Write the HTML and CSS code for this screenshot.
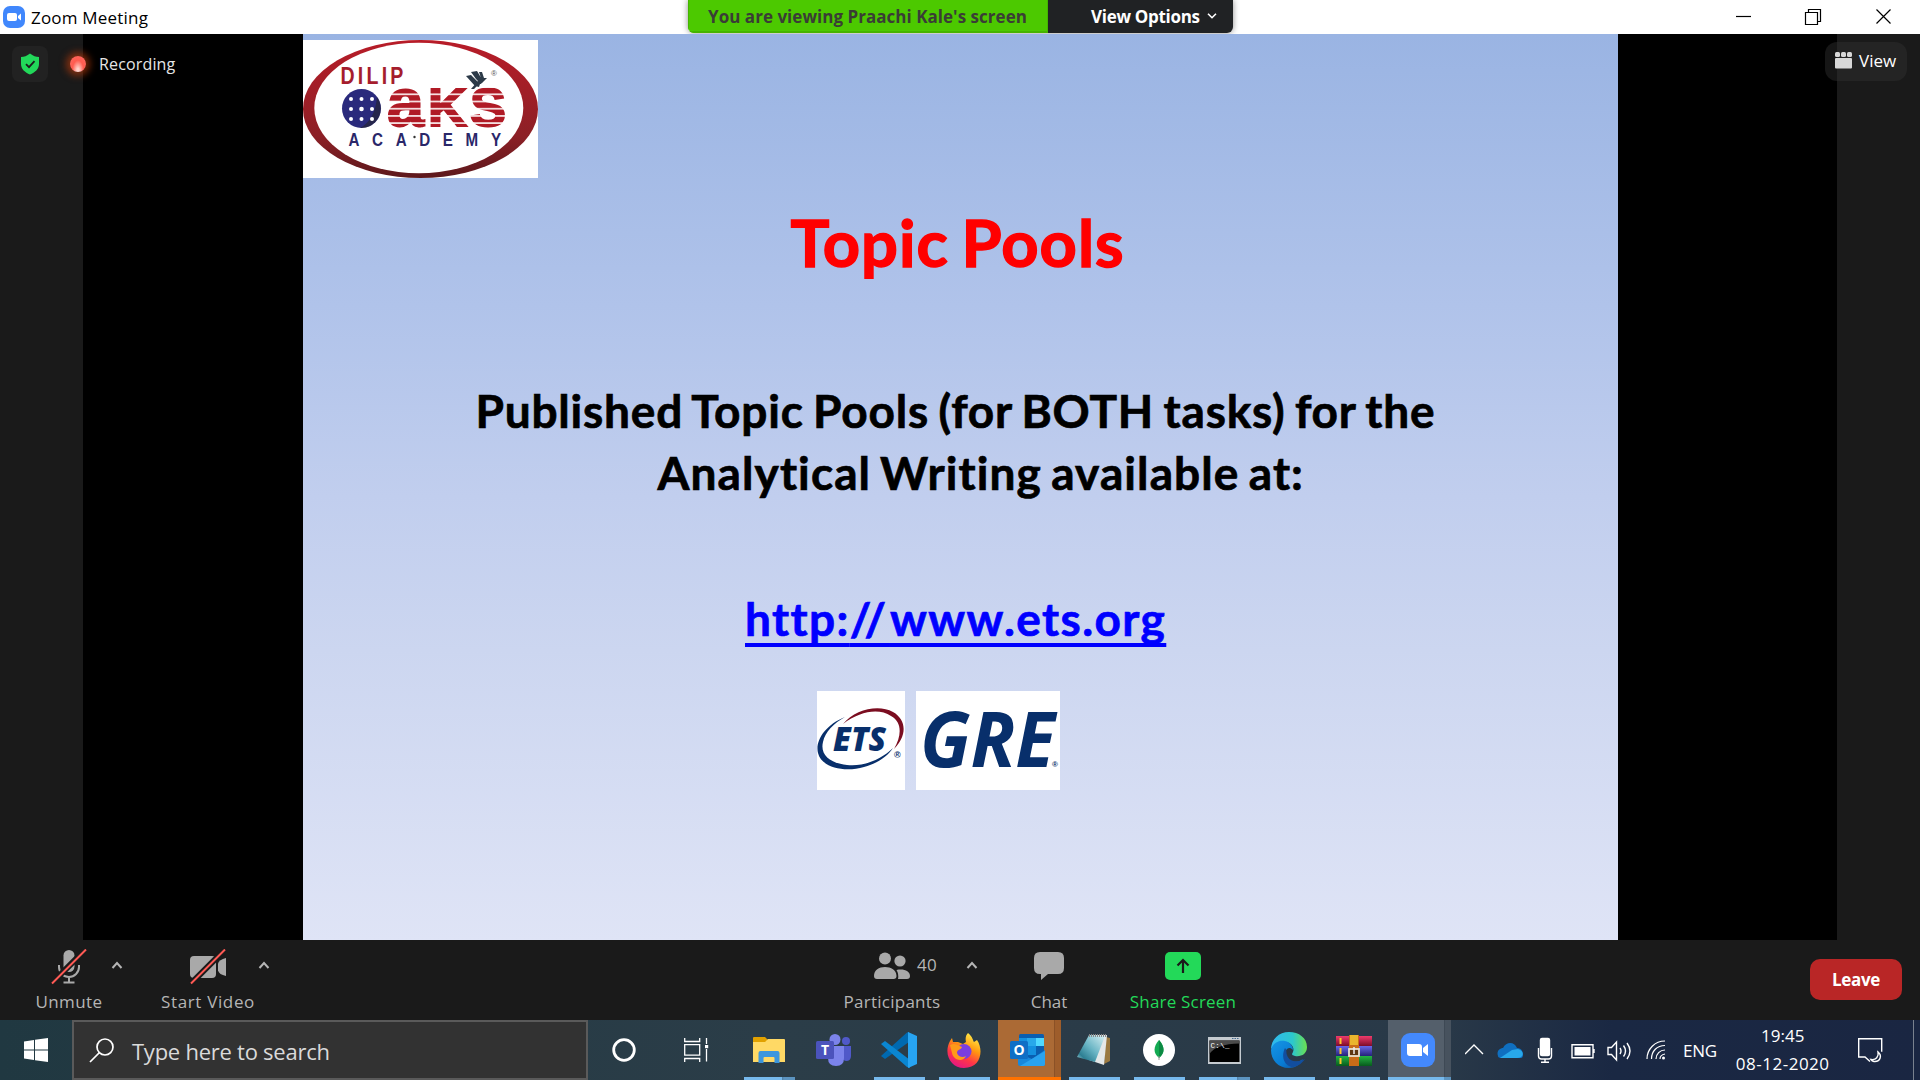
FILE: index.html
```html
<!DOCTYPE html>
<html lang="en"><head><meta charset="utf-8"><title>Zoom Meeting</title><link rel="stylesheet" href="styles.css"></head>
<body>
<header class="titlebar">
  <svg class="app-icon" width="22" height="22" viewBox="0 0 22 22"><rect width="22" height="22" rx="7" fill="#4087fc"/><rect x="4" y="7" width="10" height="8" rx="2" fill="#fff"/><path d="M15 10l3-2.500v7L15 12z" fill="#fff"/></svg>
  <span class="title"><span class="t">Zoom Meeting</span></span>
  <svg class="controls" width="155" height="16" viewBox="0 0 155 16" fill="none" stroke="#000" stroke-width="1.200"><path d="M0 7.500h15"/><path d="M69.500 3.500h12v12h-12zM72.500 3.500v-3h12v12h-3"/><path d="M140.500.5l14 14M154.500.5l-14 14"/></svg>
</header>
<div class="share-banner"><div class="viewing"><span class="t">You are viewing Praachi Kale's screen</span></div><div class="options"><span class="t">View Options</span><svg width="10" height="6" viewBox="0 0 10 6" fill="none" stroke="#fff" stroke-width="1.600"><path d="M1 .7l4 4 4-4"/></svg></div></div>
<main class="stage">
  <section class="video">
    <article class="slide">
      <svg class="academy" width="235" height="138" viewBox="0 0 235 138">
        <defs><linearGradient id="ring" x1="0" y1="0" x2="0" y2="1"><stop offset="0" stop-color="#b81c28"/><stop offset=".7" stop-color="#8c2026"/><stop offset="1" stop-color="#5c181c"/></linearGradient>
        <pattern id="stripes" width="10" height="7.200" patternUnits="userSpaceOnUse" y="48"><rect width="10" height="5.600" fill="#b01a25"/><rect y="5.600" width="10" height="1.600" fill="#f5dfe0"/></pattern></defs>
        <rect width="235" height="138" fill="#fff"/>
        <ellipse cx="117.500" cy="69" rx="117.500" ry="69" fill="url(#ring)"/><ellipse cx="115.800" cy="68" rx="104.500" ry="65.300" fill="#fff"/>
        <g font-family="Liberation Sans" font-weight="bold"><text transform="translate(37.500 44) scale(.85 1)" font-size="23" fill="#a51d2d" textLength="74">DILIP</text>
        <g fill="url(#stripes)" stroke="url(#stripes)" stroke-width="2"><text x="84" y="86" font-size="68" textLength="37" lengthAdjust="spacingAndGlyphs">a</text><text x="125" y="86" font-size="54" textLength="39" lengthAdjust="spacingAndGlyphs">K</text><text x="167" y="86" font-size="53" textLength="36" lengthAdjust="spacingAndGlyphs">S</text></g>
        <g font-size="18.500" fill="#2a2769"><text transform="translate(45.500 106) scale(.82 1)" textLength="186">ACADEMY</text></g><text x="188" y="36" font-size="8" font-weight="normal" fill="#555">®</text></g>
        <circle cx="58.500" cy="68.500" r="19.500" fill="#2a2a7c"/><path d="M74 57a19.500 19.500 0 0 1-17 31q15-8 17-31z" fill="#222" opacity=".55"/>
        <g fill="#fff"><circle cx="48" cy="59" r="2"/><circle cx="58.500" cy="59" r="2"/><circle cx="69" cy="59" r="2"/><circle cx="48" cy="69" r="2"/><circle cx="58.500" cy="69" r="2.300"/><circle cx="69" cy="69" r="2"/><circle cx="48" cy="79" r="2"/><circle cx="58.500" cy="79" r="2"/><circle cx="69" cy="79" r="2"/></g>
        <path d="M163 36l5-1 9 9-1 3-4-1zM168 32l6-1 6 10-2 3-5-5zM176 32l3 0 2 6 3 0-5 5-5 3-3 3-3 0 6-7 4-4z" fill="#2c3a48"/><circle cx="111.500" cy="97" r="1.200" fill="#333"/>
      </svg>
      <h1><span class="t">Topic Pools</span></h1>
      <p class="line one"><span class="t">Published Topic Pools (for BOTH tasks) for the</span></p>
      <p class="line two"><span class="t">Analytical Writing available at:</span></p>
      <p class="line url"><a class="t">http:<span class="slashes">//</span>www.ets.org</a></p>
      <div class="marks">
        <svg width="88" height="99" viewBox="0 0 88 99"><rect width="88" height="99" fill="#fff"/><path d="M28 26C8 34-2 50 1 62c3 14 26 20 46 14 14-4 24-11 29-19-12 12-31 19-46 17C12 72 3 63 6 51c2-10 11-19 22-25z" fill="#082f6b"/><path d="M26 33C38 18 62 13 76 21c14 8 14 24 1 37 8-14 8-27-3-33-12-8-31-5-48 8z" fill="#7b0d20"/><text x="16" y="60" font-family="Open Sans" font-weight="800" font-style="italic" font-size="33" fill="#082f6b" textLength="53" lengthAdjust="spacingAndGlyphs">ETS</text><text x="77" y="67" font-family="Liberation Sans" font-size="9" font-weight="bold" fill="#082f6b">®</text></svg>
        <svg width="144" height="99" viewBox="0 0 144 99"><rect width="144" height="99" fill="#fff"/><text x="4" y="76" font-family="Open Sans" font-weight="bold" font-style="italic" font-size="77" fill="#082f6b" textLength="135" lengthAdjust="spacingAndGlyphs">GRE</text><text x="136" y="76" font-family="Liberation Sans" font-size="8" font-weight="bold" fill="#082f6b">®</text></svg>
      </div>
    </article>
  </section>
  <div class="status"><span class="shield"><svg width="20" height="22" viewBox="0 0 20 22"><path d="M10 .5c3 2.500 6 3.500 9 3.500v7c0 5-4 8.500-9 10.500C5 19.500 1 16 1 11V4c3 0 6-1 9-3.500z" fill="#22d85a"/><path d="M6 11.200l3 3 5.500-6" fill="none" stroke="#1c1c1c" stroke-width="1.800"/></svg></span><i class="rec"></i><span class="t reclabel">Recording</span></div>
  <div class="view"><svg width="17" height="17" viewBox="0 0 17 17" fill="#d8d8d8"><rect width="5" height="5" rx="1.500"/><rect x="6" width="5" height="5" rx="1.500"/><rect x="12" width="5" height="5" rx="1.500"/><rect y="6" width="17" height="10.500" rx="1"/></svg><span class="t">View</span></div>
</main>
<footer class="toolbar">
  <div class="tool mute"><svg width="36" height="36" viewBox="0 0 36 36"><rect x="12.500" y="1" width="11" height="22" rx="5.500" fill="#a9a9a9"/><path d="M8 16v2a10 10 0 0 0 20 0v-2M18 28.500v5M12.500 33.500h11" fill="none" stroke="#a9a9a9" stroke-width="2"/><path d="M.5 34.500L34.500.5" stroke="#1a1a1a" stroke-width="6"/><path d="M1 34.500L35 .5" stroke="#ff5a55" stroke-width="2"/></svg><span class="t">Unmute</span></div>
  <svg class="caret c1" width="12" height="8" viewBox="0 0 12 8"><path d="M1.500 7L6 2l4.500 5"/></svg>
  <div class="tool cam"><svg width="38" height="36" viewBox="0 0 38 36"><rect x="1" y="7" width="26" height="22" rx="4" fill="#a9a9a9"/><path d="M29 14.500q1-4 8-5.500v18q-7-1.500-8-5.500z" fill="#a9a9a9"/><path d="M1.500 35L35.500 1" stroke="#1a1a1a" stroke-width="6"/><path d="M2 34.500L36 .5" stroke="#ff5a55" stroke-width="2"/></svg><span class="t">Start Video</span></div>
  <svg class="caret c2" width="12" height="8" viewBox="0 0 12 8"><path d="M1.500 7L6 2l4.500 5"/></svg>
  <div class="tool people"><div class="iconrow"><svg width="36" height="28" viewBox="0 0 36 28" fill="#a9a9a9"><circle cx="11" cy="6.500" r="6"/><circle cx="26" cy="9" r="5.600"/><path d="M0 24c0-6 5-9 11-9s11.500 3 11.500 9q0 3-3 3H3q-3 0-3-3zM24 27q1-5-1.500-9C30 16.500 36 19 36 24q0 3-3 3z"/></svg><span class="t count">40</span></div><span class="t">Participants</span></div>
  <svg class="caret c3" width="12" height="8" viewBox="0 0 12 8"><path d="M1.500 7L6 2l4.500 5"/></svg>
  <div class="tool chat"><svg width="30" height="28" viewBox="0 0 30 28"><path d="M6 0h18q6 0 6 6v10q0 6-6 6H14l-7 6v-6H6q-6 0-6-6V6q0-6 6-6z" fill="#a9a9a9"/></svg><span class="t">Chat</span></div>
  <div class="tool share"><svg width="36" height="28" viewBox="0 0 36 28"><rect width="36" height="28" rx="5" fill="#23d959"/><path d="M18 21V8M12.500 13.500L18 8l5.500 5.500" fill="none" stroke="#1a1a1a" stroke-width="2.200"/></svg><span class="t">Share Screen</span></div>
  <button class="leave"><span class="t">Leave</span></button>
</footer>
<nav class="taskbar">
  <div class="start"><svg width="24" height="24" viewBox="0 0 24 24" fill="#fff"><path d="M0 3.500L10 2v9.500H0zM11 1.800L24 0v11.500H11zM0 12.500h10V22L0 20.500zM11 12.500h13V24l-13-1.800z"/></svg></div>
  <div class="search"><svg width="25" height="25" viewBox="0 0 25 25" fill="none" stroke="#fff" stroke-width="1.700"><circle cx="16" cy="9" r="8"/><path d="M10.500 14.500L1 24"/></svg><span class="t">Type here to search</span></div>
  <div class="cell cortana"><svg width="24" height="24" viewBox="0 0 24 24"><circle cx="12" cy="12" r="10.300" fill="none" stroke="#fff" stroke-width="2.800"/></svg></div>
  <div class="cell taskview"><svg width="25" height="24" viewBox="0 0 25 24" fill="none" stroke="#fff" stroke-width="1.300"><path d="M.7 0v3.500h15V0M.7 24v-3.500h15V24M.7 6.700h15v10.500H.7zM22.500 0v6M22.500 11v12.500"/><rect x="21" y="7" width="3.200" height="3.200" fill="#fff" stroke="none"/></svg></div>
  <div class="apps">
    <div class="app run multi"><svg width="32" height="27" viewBox="0 0 32 27"><path d="M0 1q0-1 1-1h11l3 3v6H0z" fill="#e1a100"/><path d="M0 5h12l3-3h16q1 0 1 1v22H0z" fill="#ffd965"/><path d="M5.500 26V16q0-2 2-2h17q2 0 2 2v10h-5v-5q0-1-1-1h-9q-1 0-1 1v5z" fill="#3c96dd"/></svg></div>
    <div class="app"><svg width="36" height="32" viewBox="0 0 36 32"><circle cx="19" cy="5.500" r="5.500" fill="#7b83eb"/><circle cx="30" cy="7" r="4" fill="#5059c9"/><path d="M27 12h8v10q0 5-5 5l-3-1z" fill="#5059c9"/><path d="M12 12h16v12q0 8-8 8t-8-8z" fill="#7b83eb"/><rect y="7" width="18" height="18" rx="1.500" fill="#4b53bc"/><text x="9" y="21" text-anchor="middle" font-family="Open Sans" font-weight="bold" font-size="14" fill="#fff">T</text></svg></div>
    <div class="app run"><svg width="36" height="36" viewBox="0 0 36 36"><path d="M0 24l4 3L28 10V0L26 .5z" fill="#0069b0"/><path d="M0 12l4-3 25 19v8l-3-1z" fill="#0a86d1"/><path d="M27 0l9 4v28l-9 4z" fill="#27a4f2"/></svg></div>
    <div class="app run"><svg width="34" height="35" viewBox="0 0 34 35"><defs><linearGradient id="fox" x1=".8" y1="0" x2=".3" y2="1"><stop stop-color="#fff44f"/><stop offset=".4" stop-color="#ff980e"/><stop offset=".7" stop-color="#ff3647"/><stop offset="1" stop-color="#e31587"/></linearGradient></defs><path d="M21 0c5 4 5 8 6 9l3-2c7 10 4 28-13 28C4 35-4 21 3 8l2-3 1 4 5 0 5 2 3-2c-1-4 0-7 2-9z" fill="url(#fox)"/><circle cx="17" cy="18.500" r="7.500" fill="#7a3ee0"/><path d="M3 12c5-3 9 1 12 2-1 3-5 2-5 6 1 4 6 5 9 3-3 7-13 4-14-3z" fill="#ff9a19"/></svg></div>
    <div class="app alert"><svg width="35" height="32" viewBox="0 0 35 32"><rect x="9" width="25" height="30" rx="1.500" fill="#0a5eb0"/><path d="M9 4h8v8H9zM17 12h9v9h-9z" fill="#1490df"/><path d="M17 4h9v8h-9z" fill="#28a8ea"/><path d="M26 4h8v8h-8z" fill="#50d9ff"/><path d="M8 19l14 6 13-9v14q0 2-2 2H10q-2 0-2-2z" fill="#1788dc"/><path d="M10 32l25-15v13q0 2-2 2z" fill="#29a3ef"/><rect y="7" width="18" height="18" rx="1.500" fill="#0f6fc6"/><text x="9" y="21" text-anchor="middle" font-family="Open Sans" font-weight="bold" font-size="14" fill="#fff">O</text></svg></div>
    <div class="app run"><svg width="34" height="32" viewBox="0 0 34 32"><defs><linearGradient id="pad" x1="1" y1="0" x2="0" y2="1"><stop stop-color="#d9f1f4"/><stop offset=".5" stop-color="#68b4c4"/><stop offset=".8" stop-color="#2d7f93"/><stop offset="1" stop-color="#b9e0e6"/></linearGradient></defs><path d="M29 3l4 1v23l-6 3z" fill="#9b7940"/><path d="M13 1h17l-3 30-15-5z" fill="#e5e8e8"/><path d="M12 1l16 1-10 26L0 23z" fill="url(#pad)"/><path d="M12 1.500h18" stroke="#888" stroke-width="3" stroke-dasharray="1 1"/></svg></div>
    <div class="app run"><svg width="32" height="32" viewBox="0 0 32 32"><circle cx="16" cy="16" r="16" fill="#fff"/><path d="M16 6c6 7 6 13 0 18-6-5-6-11 0-18z" fill="#13aa52"/><path d="M16 6c6 7 6 13 0 18z" fill="#0c8a43"/><path d="M16 22v4" stroke="#999"/></svg></div>
    <div class="app run multi"><svg width="33" height="27" viewBox="0 0 33 27"><rect width="33" height="27" fill="#c5cbd0"/><rect x="1.500" y="3.500" width="30" height="21.500" fill="#000"/><path d="M1.500 3.500h30v3Q8 7 1.500 17z" fill="#4b4b4b"/><path d="M24 1.500h7" stroke="#456b91" stroke-dasharray="1.500 1"/><text x="2.500" y="10.500" font-family="Liberation Mono" font-size="7.500" fill="#fff" textLength="19">C:\_</text></svg></div>
    <div class="app run"><svg width="36" height="36" viewBox="0 0 36 36"><defs><linearGradient id="e1"><stop stop-color="#30b8f0"/><stop offset=".6" stop-color="#2cc7cd"/><stop offset="1" stop-color="#6be04f"/></linearGradient><linearGradient id="e2" x1="0" y1="0" x2="1" y2="1"><stop stop-color="#1696e5"/><stop offset=".6" stop-color="#087bd3"/><stop offset="1" stop-color="#124c96"/></linearGradient></defs><path d="M0 18C0 7 8 0 18 0s18 6 18 15c0 7-6 10-12 9-4-1-3-2-2-4 2-4-2-10-8-10C7 10 1 14 0 18z" fill="url(#e1)"/><path d="M0 18C2 10 9 8 14 9c5 1 8 5 8 9-5-5-9 1-7 6 2 6 10 8 17 3C29 33 24 36 18 36 7 36 0 28 0 18z" fill="url(#e2)"/><path d="M14 16c-5 10 1 19 8 19 6-1 9-4 12-8-7 4-16 3-18-4-1-3 0-5-2-7z" fill="#124e9e"/></svg></div>
    <div class="app run"><svg width="36" height="31" viewBox="0 0 36 31"><defs><linearGradient id="b1" x1="0" y1="0" x2="0" y2="1"><stop stop-color="#ef3b6c"/><stop offset="1" stop-color="#7c0c29"/></linearGradient><linearGradient id="b2" x1="0" y1="0" x2="0" y2="1"><stop stop-color="#6a67e8"/><stop offset="1" stop-color="#242178"/></linearGradient><linearGradient id="b3" x1="0" y1="0" x2="0" y2="1"><stop stop-color="#25b443"/><stop offset="1" stop-color="#075a1d"/></linearGradient></defs><rect y="1" width="36" height="10" fill="url(#b1)"/><rect y="11" width="36" height="10" fill="url(#b2)"/><rect y="21" width="36" height="10" fill="url(#b3)"/><path d="M4.500 3v6M4.500 13v6M4.500 23v6" stroke="#ffc629" stroke-width="2"/><path d="M13 0h10v31H13z" fill="#c96c18"/><path d="M14 0h8v10h-8z" fill="#eab52d"/><rect x="13" y="14" width="10" height="7" fill="#5c3510" stroke="#e8e0d0" stroke-width="1.800"/><path d="M18 12v7" stroke="#eee" stroke-width="1.500"/></svg></div>
    <div class="app active"><svg width="34" height="34" viewBox="0 0 34 34"><rect width="34" height="34" rx="9" fill="#4489fc"/><path d="M6 11h12q3 0 3 3v9H9q-3 0-3-3zM22 15l5-4v12l-5-4z" fill="#fff"/></svg></div>
  </div>
  <div class="tray">
    <svg width="167" height="60" viewBox="0 0 167 60" fill="none" stroke="#fff" stroke-width="1.400">
      <path d="M0 34l9-9 9 9"/>
      <g stroke="none"><path d="M33 36c-2-6 3-8 5-8 3-6 11-7 14 0 5 0 6 4 6 7 0 4-3 3-5 3H37q-4 0-4-2z" fill="#0f6fc0"/><path d="M35 38l12-8 6-1c7 2 6 9-1 9z" fill="#28a8ea"/></g>
      <rect x="75.500" y="18.500" width="9" height="17" rx="1.500" fill="#fff"/><path d="M73.500 28v8q0 3 3 3h7q3 0 3-3v-8M80 39v3M76 42.200h8"/>
      <path d="M107 24.700h21v13h-21zM129 29v4"/><rect x="109.500" y="27" width="16" height="8.500" fill="#fff" stroke="none"/>
      <path d="M143 27.500h3.500l5-5.500v18l-5-5.500H143zM155 28q2 3 0 6M158.500 25.500q4 5.500 0 11M162 23q6 8 0 16"/>
    </svg>
    <svg class="wifi" width="20" height="20" viewBox="0 0 20 20" fill="none" stroke="#fff" stroke-width="1.200"><path d="M1 19C1 9 9 1 19 1M5.500 19C5.500 11 11 5.500 19 5.500M10 19c0-5 4-9 9-9M14 19q0-4 5-5"/><circle cx="17.500" cy="18" r="1.500" fill="#fff" stroke="none"/></svg>
    <span class="t lang">ENG</span>
    <div class="clock"><span class="t">19:45</span><span class="t date">08-12-2020</span></div>
    <svg class="action" width="25" height="25" viewBox="0 0 25 25" fill="none" stroke="#fff" stroke-width="1.400"><path d="M12 23.500l-5-4.500H.7V.7h23v13"/><path d="M20 14c4 3 3 10-4 9.500-2-.5-3-2-3-2 5 1 8-3 7-7.500z"/></svg>
    <i class="desktop"></i>
  </div>
</nav>
</body></html>
```
FILE: styles.css
```css
*{box-sizing:border-box}
body{margin:0;width:1920px;height:1080px;overflow:hidden;display:flex;flex-direction:column;font-family:"Open Sans","Noto Sans",sans-serif;font-size:17px;background:#1a1a1a}
svg{display:block;flex:none}
.t{white-space:nowrap}
.titlebar{height:34px;background:#fff;display:flex;align-items:center;padding:0 29px 0 3px;color:#000}
.title{margin-left:6px;letter-spacing:.2px}
.controls{margin-left:auto}
.share-banner{position:absolute;left:688px;top:0;width:545px;height:33px;display:flex;border-radius:0 0 6px 6px;overflow:hidden;box-shadow:0 0 6px rgba(0,0,0,.45);font-weight:bold}
.viewing{width:360px;background:#4cc900;color:#3a3d36;padding-left:19px;border:solid #45b400;border-width:0 1px 2px;line-height:33px;letter-spacing:.03px}
.options{flex:1;background:#202224;color:#fff;display:flex;align-items:center;padding-left:43px;gap:7px;letter-spacing:-.3px;padding-bottom:1px}
.stage{height:906px;position:relative;padding:0 83px}
.video{height:906px;background:#000;padding-left:219.5px}
.slide{width:1315px;height:906px;background:linear-gradient(#9ab4e3 0,#b0c3ea 30%,#c1ceee 51%,#ccd6f0 68%,#dfe4f6 100%);padding-top:6px;display:flex;flex-direction:column;font-family:Lato,sans-serif;font-weight:bold;color:#000;-webkit-text-stroke:.7px}
.slide svg{-webkit-text-stroke:0}
h1{margin:24px 0 0;font-size:65px;line-height:80px;color:red;padding-left:488px;letter-spacing:1px;word-spacing:-4px;-webkit-text-stroke:1.4px}
.line{margin:0;font-size:46px;line-height:62px}
.one{margin-top:98px;padding-left:173px;letter-spacing:.8px;word-spacing:-2.5px}
.two{padding-left:355px;letter-spacing:1.1px;word-spacing:-3px}
.url{margin-top:84px;padding-left:442.500px;color:#00f;letter-spacing:1.4px}
.url .t{text-decoration:underline 3.500px;text-underline-offset:7px;text-decoration-skip-ink:none}
.slashes{letter-spacing:4px}
.marks{display:flex;gap:11px;margin:41px 0 0 514.500px}
.status{position:absolute;left:12px;top:12px;height:36px;display:flex;align-items:center;color:#e6e6e6;font-size:16px}
.shield{width:36px;height:36px;border-radius:8px;background:#222;display:grid;place-items:center}
.rec{width:16px;height:16px;margin-left:22px;border-radius:50%;background:radial-gradient(ellipse at 50% 90%,#ffd0c8 10%,#ff5c50 50%,#ff6a60);box-shadow:0 0 7px 4px rgba(190,60,10,.6)}
.reclabel{margin-left:13px;letter-spacing:.15px}
.view{position:absolute;right:13px;top:8px;width:82px;height:39px;border-radius:12px;background:rgba(48,48,48,.45);color:#fff;display:flex;align-items:center;padding:0 0 2px 10px;gap:7px}
.toolbar{height:80px;display:flex;color:#b5b5b5;background:#1a1a1a}
.tool{display:flex;flex-direction:column;align-items:center;justify-content:space-between;padding:9px 0 6px;line-height:24px;width:110px}
.people,.chat,.share{padding-top:12px}
.mute{margin-left:14px;letter-spacing:.4px}
.caret{fill:none;stroke:#b5b5b5;stroke-width:2;margin-top:21px}
.c1{margin-left:-13px}
.cam{margin-left:30px;letter-spacing:.65px}
.c2{margin-left:-5px}
.people{margin-left:567px;letter-spacing:.25px}
.iconrow{display:flex;gap:7px;padding-left:27px}
.count{padding-top:1px}
.c3{margin-left:19px}
.chat{margin-left:16px}
.share{margin-left:24px;color:#23d959;letter-spacing:.2px}
.leave{margin:19px 18px 0 auto;padding:0;width:92px;height:41px;border:0;border-radius:10px;background:#b92626;color:#fff;font:bold 17px "Open Sans",sans-serif;letter-spacing:-.3px}
.taskbar{height:60px;display:flex;background:linear-gradient(90deg,#203841,#2b3d48 40%,#293948 75%,#1a2843 84%,#1a2642)}
.start{width:72px;display:grid;place-items:center}
.search{width:516px;border:2px solid #5a5a5a;background:#323232;color:#dadada;display:flex;align-items:center;padding-left:15px;gap:18px;font-size:22px;letter-spacing:-.25px}
.search .t{padding-top:2px}
.cell{display:grid;place-items:center}
.cortana{width:71px}
.taskview{width:74px}
.apps{display:flex;margin-left:4px}
.app{width:65px;display:grid;place-items:center}
.run{background:linear-gradient(#76b9ed,#76b9ed) 7px 57px/51px 3px no-repeat}
.multi{background:linear-gradient(90deg,#76b9ed 38px,#4f7fa4 38px,#5c94c0 40px) 7px 57px/51px 3px no-repeat}
.alert{background:linear-gradient(#ff7200,#ff7200) 1px 57px/63px 3px no-repeat,linear-gradient(90deg,transparent 1px,#ab6a35 1px 57px,#8b5126 57px 58px,#9e5d2b 58px 64px,transparent 64px)}
.active{background:linear-gradient(90deg,#76b9ed 56px,#5c94c0 56px) 1px 57px/63px 3px no-repeat,linear-gradient(90deg,transparent 1px,#545f6b 1px 57px,#3e4955 57px 58px,#47525e 58px 64px,transparent 64px)}
.app svg{margin-right:1px}
.alert svg,.active svg{margin-right:4px}
.tray{display:flex;align-items:center;color:#fff;flex:1;margin-left:13px;font-size:17px}
.wifi{margin-left:14px}
.lang{margin-left:17px;letter-spacing:-.3px}
.clock{width:96px;margin-left:18px;display:flex;flex-direction:column;text-align:center;line-height:28px}
.date{letter-spacing:.5px}
.action{margin-left:27px}
.desktop{width:1px;height:60px;background:#79818e;margin-left:auto;margin-right:6px}
```
